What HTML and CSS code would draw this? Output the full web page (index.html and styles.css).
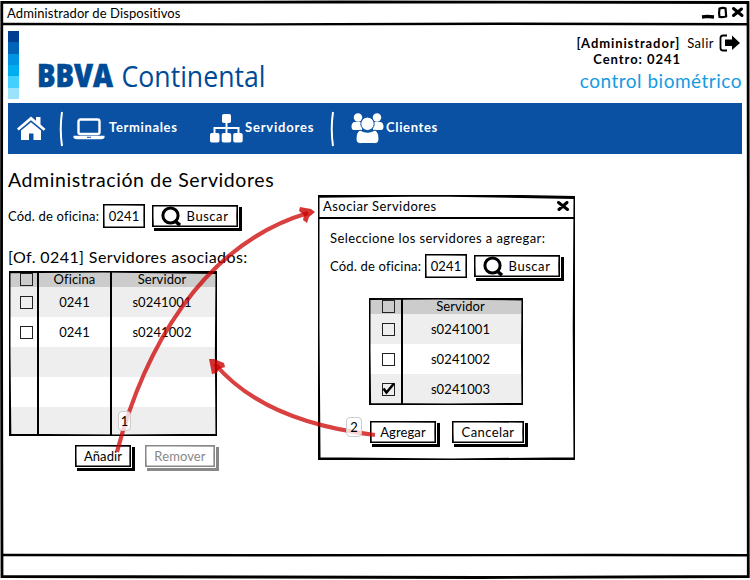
FILE: index.html
```html
<!DOCTYPE html>
<html lang="es">
<head>
<meta charset="utf-8">
<title>Administrador de Dispositivos</title>
<link rel="stylesheet" href="styles.css">
</head>
<body>
<svg class="defs" width="0" height="0">
  <symbol id="sketch" viewBox="0 0 100 100" preserveAspectRatio="none">
    <path d="M0 .5 L45 0 L100 .9 L99.700 50 L100 99.500 L52 100 L.4 99.500 L0 50 Z" fill="none" stroke="currentColor" stroke-width="3" vector-effect="non-scaling-stroke"/>
  </symbol>
  <symbol id="search" viewBox="0 0 20 20"><circle cx="9.5" cy="9.5" r="7.6" fill="none" stroke="#000" stroke-width="3"/><path d="M13.5 14.5l5.5 4.7" stroke="#000" stroke-width="3.6"/></symbol>
  <symbol id="cross" viewBox="0 0 12 10"><path d="M1.5 1.5 10.5 8.5M10 1.5 2 8.5" stroke="#000" stroke-width="3" stroke-linecap="round"/></symbol>
</svg>
<div class="window">
  <header class="titlebar">
    <span class="t-title">Administrador de Dispositivos</span>
    <svg class="controls" width="42" height="14" viewBox="0 0 42 14"><path d="M0 11l5-.6 7 .6" fill="none" stroke="#000" stroke-width="3.4"/><path d="M17.500 2.500q3-1 6-.3l.7 8.300q-3 .8-6.700 .5-.8-4 0-8.500z" fill="none" stroke="#000" stroke-width="2.200" stroke-linejoin="round"/><path d="M31.500 2.500l8.500 7M39.500 3l-8 6.500" stroke="#000" stroke-width="3" stroke-linecap="round"/></svg>
  </header>
  <div class="brandbar">
    <div class="swatches"><i class="s1"></i><i class="s2"></i><i class="s3"></i><i class="s4"></i><i class="s5"></i><i class="s6"></i></div>
    <svg class="logo" width="236" height="40" viewBox="0 0 236 40">
      <text class="bbva" x="0" y="28" textLength="76" lengthAdjust="spacingAndGlyphs">BBVA</text>
      <text class="cont" x="84.500" y="28" textLength="144" lengthAdjust="spacingAndGlyphs">Continental</text>
    </svg>
    <div class="account">
      <div class="acc-row"><b class="t-admin">[Administrador]</b><span class="t-salir">Salir</span>
        <svg width="22" height="18" viewBox="0 0 22 18"><path d="M8 1.500H4Q1.500 1.500 1.500 4V14Q1.500 16.500 4 16.500H8" fill="none" stroke="#000" stroke-width="1.800"/><path d="M6 5.500h7V1.500l8 7.500-8 7v-4H6z"/></svg>
      </div>
      <b class="t-centro">Centro: 0241</b>
      <span class="t-control">control biométrico</span>
    </div>
  </div>
  <nav class="nav">
    <svg class="home" width="30" height="26" viewBox="0 0 30 26"><path fill="#fff" d="M1 12.500 15 .5l5 4.300V1h4.500v7.500l5 4.500-1.800 1.800L15 4.300 2.700 14.600z"/><path fill="#fff" d="M5 14.500 15 6.300l10 8.200V24h-7.500v-6.500h-4.500V24H5z"/></svg>
    <svg class="sep sep1" width="5" height="36" viewBox="0 0 5 36"><path d="M3 1Q.5 18 3 35" fill="none" stroke="#fff" stroke-width="2"/></svg>
    <svg class="laptop" width="32" height="22" viewBox="0 0 32 22"><rect x="5.500" y="1.500" width="21" height="14.500" rx="2" fill="none" stroke="#fff" stroke-width="2.400"/><path d="M.5 17.800h31v1.400q-.5 2-3 2h-25q-2.500 0-3-2z" fill="#fff"/><path d="M14 19.300h4" stroke="#0a50a3"/></svg>
    <span class="t-term">Terminales</span>
    <svg class="tree" width="33" height="29" viewBox="0 0 33 29"><g fill="#fff"><rect x="12" y="0" width="9" height="9" rx="1.800"/><rect x="0" y="19" width="9.500" height="9.500" rx="1.800"/><rect x="11.700" y="19" width="9.500" height="9.500" rx="1.800"/><rect x="23.200" y="19" width="9.500" height="9.500" rx="1.800"/></g><path d="M16.500 8v12M4.500 20v-6h24v6" fill="none" stroke="#fff" stroke-width="2"/></svg>
    <span class="t-serv">Servidores</span>
    <svg class="sep sep2" width="5" height="36" viewBox="0 0 5 36"><path d="M3 1Q.5 18 3 35" fill="none" stroke="#fff" stroke-width="2"/></svg>
    <svg class="people" width="33" height="31" viewBox="0 0 33 31"><g fill="#fff"><circle cx="7" cy="4.500" r="4.200"/><circle cx="26" cy="4.500" r="4.200"/><path d="M3 9h8v8H3q-2.500 0-2.500-3.500T3 9zM30 9h-8v8h8q2.500 0 2.500-3.500T30 9z"/></g><circle cx="16.500" cy="10.800" r="6.700" fill="#fff" stroke="#0a50a3"/><path d="M9 17q7.500 4.500 15 0 4 2 4 9 0 4.500-4.500 4.500h-14Q5 30.500 5 26q0-7 4-9z" fill="#fff" stroke="#0a50a3"/></svg>
    <span class="t-cli">Clientes</span>
  </nav>
  <main class="main">
    <h1>Administración de Servidores</h1>
    <div class="search-row">
      <label class="t-cod">Cód. de oficina:</label>
      <div class="field"><svg class="frame"><use href="#sketch"/></svg>0241</div>
      <div class="btn buscar"><svg class="frame"><use href="#sketch"/></svg><svg width="20" height="20"><use href="#search"/></svg><span>Buscar</span></div>
    </div>
    <h2>[Of. 0241] Servidores asociados:</h2>
    <div class="table left">
      <div class="tr head"><i class="box"></i><span>Oficina</span><span>Servidor</span></div>
      <div class="tr odd"><i class="box"></i><span>0241</span><span>s0241001</span></div>
      <div class="tr"><i class="box"></i><span>0241</span><span>s0241002</span></div>
      <div class="tr odd"><i></i><span></span><span></span></div>
      <div class="tr"><i></i><span></span><span></span></div>
      <div class="tr odd"><i></i><span></span><span></span></div>
      <svg class="frame"><use href="#sketch"/></svg>
    </div>
    <div class="actions left-actions">
      <div class="btn anadir"><svg class="frame"><use href="#sketch"/></svg><span>Añadir</span></div>
      <div class="btn remover"><svg class="frame"><use href="#sketch"/></svg><span>Remover</span></div>
    </div>
  </main>
  <footer class="status"></footer>
  <svg class="window-frame" width="750" height="580" viewBox="0 0 750 580"><g fill="none" stroke="#000" stroke-width="2.800"><path d="M1.800 2.300 340 2 748 2.500 748.300 200 748 400 748.300 576.500 480 577.500 260 577 2 576.500 1.500 300z"/><path d="M2 24 250 24.400 500 23.800 748 24.200M2 555 300 555.300 600 555 748 555.200" stroke-width="2.400"/></g></svg>

  <section class="dialog">
    <svg class="frame"><use href="#sketch"/></svg>
    <header class="dialog-title"><span class="t-asociar">Asociar Servidores</span><svg width="12" height="10"><use href="#cross"/></svg></header>
    <div class="dialog-body">
      <p class="t-sel">Seleccione los servidores a agregar:</p>
      <div class="search-row">
        <label class="t-cod">Cód. de oficina:</label>
        <div class="field"><svg class="frame"><use href="#sketch"/></svg>0241</div>
        <div class="btn buscar"><svg class="frame"><use href="#sketch"/></svg><svg width="20" height="20"><use href="#search"/></svg><span>Buscar</span></div>
      </div>
      <div class="table right">
        <div class="tr head"><i class="box"></i><span>Servidor</span></div>
        <div class="tr odd"><i class="box"></i><span>s0241001</span></div>
        <div class="tr"><i class="box"></i><span>s0241002</span></div>
        <div class="tr odd"><i class="box"><svg width="15" height="14" viewBox="0 0 15 14"><path d="M2.500 6.500 5.500 10.500 13 1.500" fill="none" stroke="#000" stroke-width="2.600"/></svg></i><span>s0241003</span></div>
        <svg class="frame"><use href="#sketch"/></svg>
      </div>
      <div class="actions">
        <div class="btn agregar"><svg class="frame"><use href="#sketch"/></svg><span>Agregar</span></div>
        <div class="btn cancelar"><svg class="frame"><use href="#sketch"/></svg><span>Cancelar</span></div>
      </div>
    </div>
  </section>

  <svg class="arrows" width="750" height="580" viewBox="0 0 750 580">
    <g fill="none" stroke="#cc0000" stroke-opacity=".75" stroke-width="4.200"><path d="M117 452C143 353 200 245 308 213"/><path d="M375 435Q264 422 215 364"/></g>
    <g fill="#cc0000" fill-opacity=".8"><path d="M315 212 311 209 300 207 299 211 304 215 303 220 307 223 309 217z"/><path d="M209 359 214 359 224 363 225 367 219 369 217 373 212 374z"/></g>
  </svg>
  <span class="badge b1">1</span>
  <span class="badge b2">2</span>
</div>
</body>
</html>
```

FILE: styles.css
```css
* { box-sizing: border-box; }
body { margin: 0; background: #fff; color: #000; font: 13px/16px Lato, "Liberation Sans", sans-serif; letter-spacing: .1px; font-variant-ligatures: none; }
.defs { position: absolute; }
svg { display: block; overflow: visible; flex: none; }
h1, h2, p { margin: 0; font-weight: 400; white-space: nowrap; }
span, b, label { white-space: nowrap; }

.window { position: relative; width: 750px; height: 580px; overflow: hidden; display: flex; flex-direction: column; }
.window-frame, .arrows { position: absolute; left: 0; top: 0; pointer-events: none; }
.titlebar { height: 25px; padding: 0 6px 0 7px; display: flex; align-items: center; justify-content: space-between; }
.brandbar { height: 78px; padding: 6px 8px 0; display: flex; }
.swatches { width: 11px; height: 68px; display: grid; grid-template-rows: repeat(6, 1fr); }
.s1 { background: #003f8f; } .s2 { background: #0064b9; } .s3 { background: #0094e3; }
.s4 { background: #00aeef; } .s5 { background: #43d0fc; } .s6 { background: #9be2fb; }
.logo { margin: 28px 0 0 18px; fill: #004b96; letter-spacing: 0; }
.bbva { font: 800 31.500px "Open Sans"; stroke: #004b96; stroke-width: .6; }
.cont { font: 400 29px "Open Sans"; }
.account { margin-left: auto; display: flex; flex-direction: column; align-items: flex-end; }
.acc-row { height: 24px; display: flex; align-items: center; }
.acc-row svg { margin-left: 5px; margin-right: 1px; }
.t-admin { letter-spacing: .9px; }
.t-salir { margin-left: 7px; letter-spacing: .5px; }
.t-centro { margin: -4px 61px 0 0; height: 17px; line-height: 17px; letter-spacing: .95px; }
.t-control { height: 26px; line-height: 25px; font-size: 19px; letter-spacing: .5px; color: #149be2; }

.nav { height: 51px; margin: 0 8px; padding-left: 8px; background: #0a50a3; color: #fff; font-weight: 700; letter-spacing: .65px; display: flex; align-items: center; }
.nav span { padding-bottom: 4px; }
.sep1 { margin-left: 13px; } .laptop { margin-left: 9px; }
.t-term { margin-left: 4px; width: 101px; } .t-serv { margin-left: 2px; width: 85px; letter-spacing: .8px; }
.people { margin-left: 16px; } .t-cli { margin-left: 2px; }

.main { flex: 1; padding: 15px 8px 0; display: flex; flex-direction: column; align-items: flex-start; }
h1 { font-size: 19.500px; line-height: 22px; letter-spacing: .6px; }
h2 { font-size: 16px; line-height: 18px; margin-top: 19px; letter-spacing: .4px; }
.search-row { height: 26px; display: flex; align-items: center; }
.main .search-row { margin-top: 12px; }
.t-cod { width: 94px; letter-spacing: .18px; }
.field, .btn, .table, .dialog { position: relative; }
.frame { position: absolute; left: 1px; top: 1px; width: calc(100% - 2px); height: calc(100% - 2px); }
.frame use { width: 100%; height: 100%; }
.field { width: 44px; height: 26px; display: flex; align-items: center; justify-content: center; }
.btn { height: 24px; display: flex; align-items: center; justify-content: center; background: #fff; box-shadow: 3px 3px 0 #000; }
.buscar { width: 88px; margin-left: 5px; gap: 6px; letter-spacing: .55px; }
.buscar > span { margin-right: 1px; }
.left { width: 210px; height: 167px; margin-top: 4px; padding: 1px 2px; }
.tr { height: 30px; display: grid; }
.left .tr { grid-template-columns: 27px 73px 1fr; }
.right .tr { grid-template-columns: 31px 1fr; }
.tr.head, .right .tr.head { height: 16px; background: #ccc; }
.tr.odd { background: #eee; }
.tr > span { border-left: 2.500px solid #000; display: flex; align-items: center; justify-content: center; }
.left .tr > span:last-child, .right .tr > span { padding-right: 4px; }
.box::before { content: ""; display: block; width: 11px; height: 11px; border: 1px solid #222; }
.box { position: relative; display: flex; align-items: center; justify-content: center; padding-left: 6px; }
.box svg { position: absolute; }
.left .tr:last-of-type { height: 29px; }
.actions { display: flex; }
.left-actions { margin: 7px 0 0 66px; }
.anadir { width: 58px; } .remover { width: 72px; margin-left: 12px; color: #888; box-shadow: 3px 3px 0 #888; }

.dialog { position: absolute; left: 317px; top: 194px; width: 259px; height: 267px; background: #fff; }
.dialog-title { height: 25px; margin: 0 2px; padding: 1px 5px 0 4px; display: flex; align-items: center; justify-content: space-between; border-bottom: 2px solid #000; letter-spacing: .45px; }
.dialog-body { padding: 11px 12px 0 13px; }
.t-sel { height: 17px; letter-spacing: .4px; }
.dialog-body .search-row { margin-top: 6px; }
.right { width: 156px; height: 109px; margin: 18px 0 0 38px; padding: 1px 2px; }
.dialog .actions { margin: 14px 0 0 39px; }
.agregar { width: 68px; } .cancelar { width: 74px; margin-left: 14px; letter-spacing: .4px; }

.badge { position: absolute; background: rgba(255, 255, 255, .78); border: 1px solid #ccc; border-radius: 4px; text-align: center; }
.b1 { left: 118px; top: 411px; width: 13px; height: 20px; line-height: 18px; }
.b2 { left: 346px; top: 417px; width: 16px; height: 20px; line-height: 18px; }
```
